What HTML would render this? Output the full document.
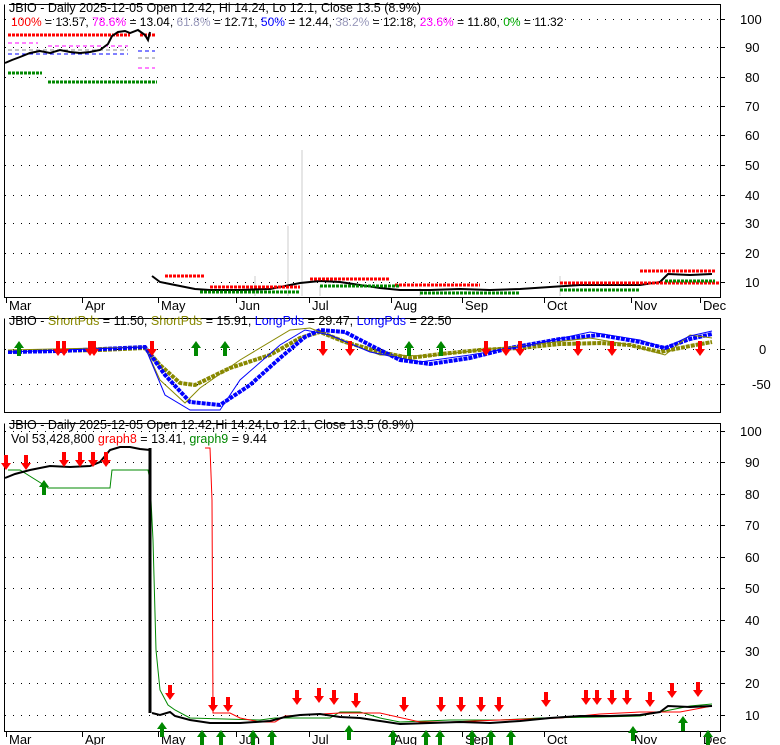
<!DOCTYPE html><html><head><style>
body{margin:0;background:#fff;width:780px;height:745px;overflow:hidden}
svg{display:block;font-family:"Liberation Sans",Arial,sans-serif}
</style></head><body>
<svg width="780" height="745" viewBox="0 0 780 745">
<g fill="none" stroke="#000" stroke-width="1">
<path d="M4.5 4.5V297.5H720.5V4.5H9"/>
<path d="M4.5 318.5V412.5H720.5V318.5H9"/>
<path d="M4.5 423.5V731.5H720.5V423.5H9"/>
</g>
<g stroke="#000" stroke-dasharray="1 7" stroke-width="1">
<path d="M5 19.5H720M5 47.5H720M5 77.5H720M5 106.5H720M5 135.5H720M5 165.5H720M5 195.5H720M5 223.5H720M5 253.5H720M5 282.5H720"/>
<path d="M5 349.5H720M5 384.5H720"/>
<path d="M5 431.5H720M5 462.5H720M5 494.5H720M5 525.5H720M5 557.5H720M5 588.5H720M5 620.5H720M5 651.5H720M5 683.5H720M5 715.5H720"/>
</g>
<g stroke="#000"><path d="M720 19.5h5M720 47.5h5M720 77.5h5M720 106.5h5M720 135.5h5M720 165.5h5M720 195.5h5M720 223.5h5M720 253.5h5M720 282.5h5M720 349.5h5M720 384.5h5M720 431.5h5M720 462.5h5M720 494.5h5M720 525.5h5M720 557.5h5M720 588.5h5M720 620.5h5M720 651.5h5M720 683.5h5M720 715.5h5"/>
<path d="M6.5 297v6M82.5 297v6M158.5 297v6M236.5 297v6M309.5 297v6M391.5 297v6M462.5 297v6M544.5 297v6M631.5 297v6M700.5 297v6"/>
<path d="M6.5 731v6M82.5 731v6M158.5 731v6M236.5 731v6M309.5 731v6M391.5 731v6M462.5 731v6M544.5 731v6M631.5 731v6M700.5 731v6"/></g>
<g font-size="13" fill="#000">
<text x="740" y="24">100</text><text x="745" y="52">90</text><text x="745" y="82">80</text><text x="745" y="111">70</text><text x="745" y="140">60</text><text x="745" y="170">50</text><text x="745" y="200">40</text><text x="745" y="228">30</text><text x="745" y="258">20</text><text x="745" y="287">10</text>
<text x="759" y="354">0</text><text x="752" y="389">-50</text>
<text x="740" y="436">100</text><text x="745" y="467">90</text><text x="745" y="499">80</text><text x="745" y="530">70</text><text x="745" y="562">60</text><text x="745" y="593">50</text><text x="745" y="625">40</text><text x="745" y="656">30</text><text x="745" y="688">20</text><text x="745" y="720">10</text>
</g>
<g font-size="13" fill="#000">
<text x="9" y="310">Mar</text><text x="85" y="310">Apr</text><text x="161" y="310">May</text><text x="239" y="310">Jun</text><text x="312" y="310">Jul</text><text x="394" y="310">Aug</text><text x="465" y="310">Sep</text><text x="547" y="310">Oct</text><text x="634" y="310">Nov</text><text x="703" y="310">Dec</text>
<text x="9" y="744">Mar</text><text x="85" y="744">Apr</text><text x="161" y="744">May</text><text x="239" y="744">Jun</text><text x="312" y="744">Jul</text><text x="394" y="744">Aug</text><text x="465" y="744">Sep</text><text x="547" y="744">Oct</text><text x="634" y="744">Nov</text><text x="703" y="744">Dec</text>
</g>
<g font-size="12.5">
<text x="9" y="12" fill="#000">JBIO - Daily 2025-12-05 Open 12.42, Hi 14.24, Lo 12.1, Close 13.5 (8.9%)</text>
<text x="11" y="26" font-size="12"><tspan fill="#f00">100%</tspan><tspan fill="#000"> = 13.57, </tspan><tspan fill="#f0f">78.6%</tspan><tspan fill="#000"> = 13.04, </tspan><tspan fill="#99b">61.8%</tspan><tspan fill="#000"> = 12.71, </tspan><tspan fill="#00f">50%</tspan><tspan fill="#000"> = 12.44, </tspan><tspan fill="#99b">38.2%</tspan><tspan fill="#000"> = 12.18, </tspan><tspan fill="#f0f">23.6%</tspan><tspan fill="#000"> = 11.80, </tspan><tspan fill="#0a0">0%</tspan><tspan fill="#000"> = 11.32</tspan></text>
<text x="9" y="325"><tspan fill="#000">JBIO - </tspan><tspan fill="#880">ShortPds</tspan><tspan fill="#000"> = 11.50, </tspan><tspan fill="#880">ShortPds</tspan><tspan fill="#000"> = 15.91, </tspan><tspan fill="#00f">LongPds</tspan><tspan fill="#000"> = 29.47, </tspan><tspan fill="#00f">LongPds</tspan><tspan fill="#000"> = 22.50</tspan></text>
<text x="9" y="429" fill="#000">JBIO - Daily 2025-12-05 Open 12.42,Hi 14.24,Lo 12.1, Close 13.5 (8.9%)</text>
<text x="11" y="443"><tspan fill="#000">Vol 53,428,800 </tspan><tspan fill="#f00">graph8</tspan><tspan fill="#000"> = 13.41, </tspan><tspan fill="#080">graph9</tspan><tspan fill="#000"> = 9.44</tspan></text>
</g>
<g stroke-width="3" stroke-dasharray="3 1">
<path d="M8 35H130M140 35H155M165 276H205" stroke="#f00"/>
<path d="M8 73H42M48 82H157" stroke="#080"/>
</g>
<g stroke-width="1" stroke-dasharray="4 3">
<path d="M8 43H38M48 46H128M138 68H155" stroke="#f0f"/>
<path d="M8 50H128M138 58H155" stroke="#888"/>
<path d="M8 54H128M138 51H155" stroke="#00f"/>
</g>
<polyline fill="none" stroke="#000" stroke-width="2" points="5,63 12,60 20,57 30,53 40,51 50,53 60,50 70,52 80,53 90,52 100,50 108,44 112,36 118,32 125,31 130,33 138,30 145,35 148,40 150,32"/>
<g stroke="#e6e6e6" stroke-width="2"><path d="M255 296v-20M288 296v-70M302 296v-146M302 296v-6M320 296v-10M420 296v-8M560 296v-20"/></g>
<polyline fill="none" stroke="#000" stroke-width="2" points="152,276 160,282 170,284 180,286 195,289 210,290 240,290 270,289 285,286 300,283 320,281 340,282 360,285 380,288 400,290 430,290 460,289 490,290 520,289 550,287 580,285 610,285 640,285 660,282 668,274 690,275 712,274"/>
<g stroke-width="3" stroke-dasharray="3 1" fill="none">
<path d="M210 287H300M310 279H390M395 285H480M560 283H720M640 271H715" stroke="#f00"/>
<path d="M200 292H300M320 286H400M420 293H520M560 290H640M665 281H715" stroke="#080"/>
</g>
<polyline fill="none" stroke="#880" stroke-width="4" stroke-dasharray="4 1" points="8,352 50,351 100,350 145,348 160,365 180,383 195,385 230,368 270,355 300,338 320,332 345,342 380,352 410,358 440,354 480,350 520,348 560,344 600,343 630,345 660,352 690,346 712,342"/>
<polyline fill="none" stroke="#00f" stroke-width="4" stroke-dasharray="4 1" points="8,352 60,351 145,347 165,375 190,402 220,405 250,385 280,358 305,337 320,330 345,332 370,345 400,360 430,364 470,358 510,348 560,339 600,335 640,342 665,348 690,339 712,334"/>
<polyline fill="none" stroke="#880" stroke-width="1" points="8,350 145,347 160,380 185,403 200,388 240,360 290,330 310,328 340,340 380,355 430,356 480,350 530,345 590,338 630,345 665,355 690,335 712,338"/>
<polyline fill="none" stroke="#00f" stroke-width="1" points="8,352 145,347 165,395 190,410 220,410 240,380 280,345 305,330 330,335 370,352 420,362 470,355 530,345 590,332 640,340 665,348 690,336 712,331"/>
<g fill="#080"><path d="M19 341l-5 7h3v8h4v-8h3z"/><path d="M196 341l-5 7h3v8h4v-8h3z"/><path d="M225 341l-5 7h3v8h4v-8h3z"/><path d="M441 341l-5 7h3v8h4v-8h3z"/><path d="M409 341l-5 7h3v8h4v-8h3z"/></g>
<g fill="#f00"><path d="M58 356l-5-7h3v-8h4v8h3z"/><path d="M64 356l-5-7h3v-8h4v8h3z"/><path d="M90 356l-5-7h3v-8h4v8h3z"/><path d="M94 356l-5-7h3v-8h4v8h3z"/><path d="M152 356l-5-7h3v-8h4v8h3z"/><path d="M323 356l-5-7h3v-8h4v8h3z"/><path d="M350 356l-5-7h3v-8h4v8h3z"/><path d="M486 356l-5-7h3v-8h4v8h3z"/><path d="M506 356l-5-7h3v-8h4v8h3z"/><path d="M520 356l-5-7h3v-8h4v8h3z"/><path d="M578 356l-5-7h3v-8h4v8h3z"/><path d="M612 356l-5-7h3v-8h4v8h3z"/><path d="M700 356l-5-7h3v-8h4v8h3z"/></g>
<polyline fill="none" stroke="#080" stroke-width="1" points="8,470 20,470 44,485 48,488 110,488 112,470 148,470 150,480 153,540 156,650 160,690 168,705 175,710 190,718 260,720 275,718 330,718 340,712 360,712 380,718 400,722 450,720 500,720 540,718 600,717 640,716 660,712 690,706 712,704"/>
<polyline fill="none" stroke="#f00" stroke-width="1" points="205,448 210,448 212,500 213,713 230,713 240,718 260,722 275,722 285,716 340,713 380,713 420,722 450,722 500,720 560,718 600,714 640,712 680,712 712,706"/>
<path d="M150 448V713" stroke="#000" stroke-width="3"/>
<polyline fill="none" stroke="#000" stroke-width="2" points="5,478 15,474 30,470 50,466 70,467 90,466 100,462 110,450 120,447 130,447 140,449 150,450"/>
<polyline fill="none" stroke="#000" stroke-width="2" points="152,713 160,715 170,712 175,716 190,720 210,723 240,723 270,721 285,717 300,715 320,714 340,717 360,718 380,721 400,724 430,723 460,722 490,723 520,721 550,718 580,716 610,716 640,715 660,712 668,706 690,707 712,706"/>
<g fill="#080"><path d="M162 722l-5 7h3v8h4v-8h3z"/><path d="M202 730l-5 7h3v8h4v-8h3z"/><path d="M221 730l-5 7h3v8h4v-8h3z"/><path d="M253 730l-5 7h3v8h4v-8h3z"/><path d="M272 730l-5 7h3v8h4v-8h3z"/><path d="M349 725l-5 7h3v8h4v-8h3z"/><path d="M393 730l-5 7h3v8h4v-8h3z"/><path d="M426 730l-5 7h3v8h4v-8h3z"/><path d="M440 730l-5 7h3v8h4v-8h3z"/><path d="M472 730l-5 7h3v8h4v-8h3z"/><path d="M491 730l-5 7h3v8h4v-8h3z"/><path d="M511 730l-5 7h3v8h4v-8h3z"/><path d="M633 726l-5 7h3v8h4v-8h3z"/><path d="M683 716l-5 7h3v8h4v-8h3z"/><path d="M708 730l-5 7h3v8h4v-8h3z"/><path d="M44 480l-5 7h3v8h4v-8h3z"/></g>
<g fill="#f00"><path d="M6 470l-5-7h3v-8h4v8h3z"/><path d="M26 470l-5-7h3v-8h4v8h3z"/><path d="M64 467l-5-7h3v-8h4v8h3z"/><path d="M80 467l-5-7h3v-8h4v8h3z"/><path d="M93 467l-5-7h3v-8h4v8h3z"/><path d="M106 467l-5-7h3v-8h4v8h3z"/><path d="M170 700l-5-7h3v-8h4v8h3z"/><path d="M213 712l-5-7h3v-8h4v8h3z"/><path d="M228 712l-5-7h3v-8h4v8h3z"/><path d="M297 705l-5-7h3v-8h4v8h3z"/><path d="M319 703l-5-7h3v-8h4v8h3z"/><path d="M334 705l-5-7h3v-8h4v8h3z"/><path d="M356 708l-5-7h3v-8h4v8h3z"/><path d="M404 712l-5-7h3v-8h4v8h3z"/><path d="M441 712l-5-7h3v-8h4v8h3z"/><path d="M461 712l-5-7h3v-8h4v8h3z"/><path d="M481 712l-5-7h3v-8h4v8h3z"/><path d="M499 712l-5-7h3v-8h4v8h3z"/><path d="M546 707l-5-7h3v-8h4v8h3z"/><path d="M586 705l-5-7h3v-8h4v8h3z"/><path d="M597 705l-5-7h3v-8h4v8h3z"/><path d="M612 705l-5-7h3v-8h4v8h3z"/><path d="M627 705l-5-7h3v-8h4v8h3z"/><path d="M650 707l-5-7h3v-8h4v8h3z"/><path d="M672 698l-5-7h3v-8h4v8h3z"/><path d="M698 697l-5-7h3v-8h4v8h3z"/></g>
</svg>
</body></html>
